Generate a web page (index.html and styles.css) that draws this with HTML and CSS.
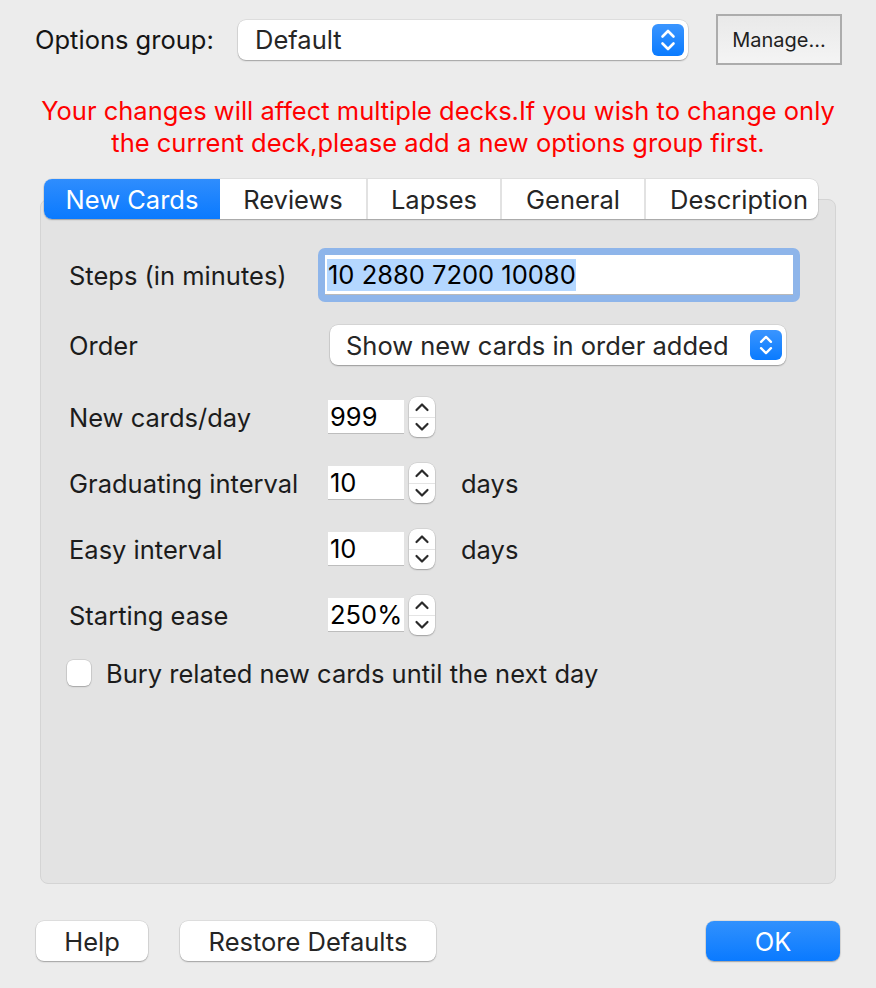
FILE: index.html
```html
<!DOCTYPE html>
<html lang="en">
<head>
<meta charset="utf-8">
<title>Options</title>
<link rel="stylesheet" href="styles.css">
</head>
<body>
<div class="dialog">
  <div class="top">
    <span class="top-label">Options group:</span>
    <div class="combo combo-group">
      <span class="combo-text">Default</span>
      <span class="combo-btn">
        <svg width="20" height="26" viewBox="0 0 20 26"><path d="M4.5 9.5 L10 4 L15.5 9.5 M4.5 16.5 L10 22 L15.5 16.5" fill="none" stroke="#fff" stroke-width="2.6" stroke-linecap="round" stroke-linejoin="round"/></svg>
      </span>
    </div>
    <button class="manage">Manage...</button>
  </div>

  <p class="warning">Your changes will affect multiple decks.If you wish to change only<br>the current deck,please add a new options group first.</p>

  <div class="tabwrap">
    <div class="tabs">
      <div class="tab tab-active t1">New Cards</div>
      <div class="tab t2">Reviews</div>
      <div class="tab t3">Lapses</div>
      <div class="tab t4">General</div>
      <div class="tab t5">Description</div>
    </div>
    <div class="panel">
      <div class="row row-steps">
        <span class="label label-steps">Steps (in minutes)</span>
        <div class="focus-ring">
          <div class="text-input"><span class="selected">10 2880 7200 10080</span></div>
        </div>
      </div>

      <div class="row row-order">
        <span class="label">Order</span>
        <div class="combo combo-order">
          <span class="combo-text">Show new cards in order added</span>
          <span class="combo-btn small">
            <svg width="18" height="24" viewBox="0 0 20 26"><path d="M4.5 9.5 L10 4 L15.5 9.5 M4.5 16.5 L10 22 L15.5 16.5" fill="none" stroke="#fff" stroke-width="2.6" stroke-linecap="round" stroke-linejoin="round"/></svg>
          </span>
        </div>
      </div>

      <div class="row row-spin first-spin">
        <span class="label">New cards/day</span>
        <div class="spin-input">999</div>
        <div class="stepper">
          <span class="step-half"><svg width="18" height="12" viewBox="0 0 18 12"><path d="M3.5 9 L9 3.5 L14.5 9" fill="none" stroke="#2a2a2a" stroke-width="2.2" stroke-linecap="round" stroke-linejoin="round"/></svg></span>
          <span class="step-half bottom"><svg width="18" height="12" viewBox="0 0 18 12"><path d="M3.5 3 L9 8.5 L14.5 3" fill="none" stroke="#2a2a2a" stroke-width="2.2" stroke-linecap="round" stroke-linejoin="round"/></svg></span>
        </div>
      </div>

      <div class="row row-spin">
        <span class="label">Graduating interval</span>
        <div class="spin-input">10</div>
        <div class="stepper">
          <span class="step-half"><svg width="18" height="12" viewBox="0 0 18 12"><path d="M3.5 9 L9 3.5 L14.5 9" fill="none" stroke="#2a2a2a" stroke-width="2.2" stroke-linecap="round" stroke-linejoin="round"/></svg></span>
          <span class="step-half bottom"><svg width="18" height="12" viewBox="0 0 18 12"><path d="M3.5 3 L9 8.5 L14.5 3" fill="none" stroke="#2a2a2a" stroke-width="2.2" stroke-linecap="round" stroke-linejoin="round"/></svg></span>
        </div>
        <span class="unit">days</span>
      </div>

      <div class="row row-spin">
        <span class="label">Easy interval</span>
        <div class="spin-input">10</div>
        <div class="stepper">
          <span class="step-half"><svg width="18" height="12" viewBox="0 0 18 12"><path d="M3.5 9 L9 3.5 L14.5 9" fill="none" stroke="#2a2a2a" stroke-width="2.2" stroke-linecap="round" stroke-linejoin="round"/></svg></span>
          <span class="step-half bottom"><svg width="18" height="12" viewBox="0 0 18 12"><path d="M3.5 3 L9 8.5 L14.5 3" fill="none" stroke="#2a2a2a" stroke-width="2.2" stroke-linecap="round" stroke-linejoin="round"/></svg></span>
        </div>
        <span class="unit">days</span>
      </div>

      <div class="row row-spin">
        <span class="label">Starting ease</span>
        <div class="spin-input">250%</div>
        <div class="stepper">
          <span class="step-half"><svg width="18" height="12" viewBox="0 0 18 12"><path d="M3.5 9 L9 3.5 L14.5 9" fill="none" stroke="#2a2a2a" stroke-width="2.2" stroke-linecap="round" stroke-linejoin="round"/></svg></span>
          <span class="step-half bottom"><svg width="18" height="12" viewBox="0 0 18 12"><path d="M3.5 3 L9 8.5 L14.5 3" fill="none" stroke="#2a2a2a" stroke-width="2.2" stroke-linecap="round" stroke-linejoin="round"/></svg></span>
        </div>
      </div>

      <div class="row row-check">
        <span class="checkbox"></span>
        <span class="check-label">Bury related new cards until the next day</span>
      </div>
    </div>
  </div>

  <div class="footer">
    <button class="btn btn-help">Help</button>
    <button class="btn btn-restore">Restore Defaults</button>
    <span class="spacer"></span>
    <button class="btn btn-ok">OK</button>
  </div>
</div>
</body>
</html>
```

FILE: styles.css
```css
* { box-sizing: border-box; }

html, body {
  margin: 0;
  padding: 0;
  background: #ececec;
}

body {
  font-family: Inter, "Noto Sans", "Liberation Sans", sans-serif;
  font-size: 25.5px;
  color: #1f1f1f;
}

.dialog {
  width: 876px;
  height: 988px;
  padding: 14px 0 0 0;
}

/* top row */
.top {
  display: flex;
  align-items: center;
  height: 51px;
  padding-left: 35px;
}

.top-label {
  width: 203px;
  color: #151515;
}

.combo {
  display: flex;
  align-items: center;
  background: #fff;
  border-radius: 8px;
  box-shadow: 0 0 0 0.5px rgba(0,0,0,0.12), 0 1px 1.5px rgba(0,0,0,0.28);
}

.combo-group {
  width: 450px;
  height: 40px;
  padding: 0 4px 0 17px;
}

.combo-text {
  flex: 1;
  color: #262626;
}

.combo-btn {
  width: 32px;
  height: 32px;
  border-radius: 6px;
  background: linear-gradient(#3a95ff, #0a7bff);
  display: flex;
  align-items: center;
  justify-content: center;
}

.combo-btn.small {
  width: 32px;
  height: 30px;
}

.manage {
  margin-left: 28px;
  width: 126px;
  height: 51px;
  border: 2px solid #acacac;
  background: linear-gradient(#e9e9e9, #f4f4f4);
  font-family: inherit;
  font-size: 20px;
  color: #1f1f1f;
  padding: 0;
}

/* warning */
.warning {
  margin: 30px 0 0 0;
  text-align: center;
  color: #ff0000;
  line-height: 32px;
}

/* tabs and panel */
.tabwrap {
  margin-top: 20px;
  padding-left: 40px;
  width: 836px;
}

.tabs {
  display: flex;
  margin-left: 4px;
  width: 774px;
  height: 40px;
  background: #fff;
  border-radius: 8px;
  box-shadow: 0 0 0 0.5px rgba(0,0,0,0.1), 0 1px 1.5px rgba(0,0,0,0.25);
  position: relative;
  z-index: 1;
  margin-bottom: -20px;
}

.tab {
  display: flex;
  align-items: center;
  justify-content: center;
  height: 40px;
  color: #252525;
  border-left: 2px solid #e2e2e2;
}

.t1 { width: 176px; border-left: none; }
.t2 { width: 146px; border-left: none; }
.t3 { width: 134px; }
.t4 { width: 144px; }
.t5 { width: 174px; padding-left: 14px; }

.tab-active {
  background: linear-gradient(#2f8dfd, #0a7aff);
  color: #fff;
  border-radius: 8px 0 0 8px;
}

.panel {
  height: 685px;
  background: #e3e3e3;
  border: 1px solid #d4d4d4;
  border-radius: 8px;
  padding: 48px 0 0 28px;
}

.row {
  display: flex;
  align-items: center;
}

.label {
  width: 259px;
  color: #1c1c1c;
}

.row-steps {
  height: 54px;
}

.label-steps {
  width: 249px;
}

.focus-ring {
  width: 482px;
  height: 54px;
  padding: 7px;
  background: #8eb5ea;
  border-radius: 7px;
}

.text-input {
  height: 40px;
  background: #fff;
  border-bottom: 1px solid #b9b9b9;
  padding-left: 2px;
  display: flex;
  align-items: center;
  color: #000;
}

.selected {
  background: #b4d7ff;
  line-height: 32px;
  padding: 0 0 0 1px;
}

.row-order {
  height: 40px;
  margin-top: 23px;
}

.combo-order {
  margin-left: 2px;
  width: 456px;
  height: 40px;
  padding: 0 4px 0 16px;
}

.row-spin {
  height: 40px;
  margin-top: 26px;
}

.first-spin {
  margin-top: 32px;
}

.spin-input {
  width: 76px;
  height: 34px;
  background: #fff;
  border-bottom: 1px solid #bdbdbd;
  padding-left: 2px;
  display: flex;
  align-items: center;
  color: #000;
}

.stepper {
  margin-left: 5px;
  width: 26px;
  height: 40px;
  background: #fff;
  border-radius: 8px;
  box-shadow: 0 0 0 0.5px rgba(0,0,0,0.12), 0 1px 1.5px rgba(0,0,0,0.25);
  display: flex;
  flex-direction: column;
}

.step-half {
  flex: 1;
  display: flex;
  align-items: center;
  justify-content: center;
}

.step-half.bottom {
  border-top: 1px solid #e4e4e4;
}

.unit {
  margin-left: 26px;
  color: #1c1c1c;
}

.row-check {
  height: 28px;
  margin-top: 24px;
}

.checkbox {
  margin-left: -2px;
  width: 24px;
  height: 26px;
  background: #fff;
  border-radius: 6px;
  box-shadow: 0 0 0 0.5px rgba(0,0,0,0.15), 0 1px 1.5px rgba(0,0,0,0.22);
}

.check-label {
  margin-left: 15px;
  color: #1c1c1c;
}

/* footer */
.footer {
  display: flex;
  align-items: center;
  margin-top: 37px;
  padding: 0 36px 0 36px;
  height: 40px;
}

.btn {
  height: 40px;
  border: none;
  border-radius: 8px;
  background: #fff;
  font-family: inherit;
  font-size: 25.5px;
  color: #252525;
  box-shadow: 0 0 0 0.5px rgba(0,0,0,0.12), 0 1px 1.5px rgba(0,0,0,0.28);
  padding: 0;
}

.btn-help { width: 112px; }
.btn-restore { width: 256px; margin-left: 32px; }

.spacer { flex: 1; }

.btn-ok {
  width: 134px;
  background: linear-gradient(#3191fd, #0a7aff);
  color: #fff;
}
```
